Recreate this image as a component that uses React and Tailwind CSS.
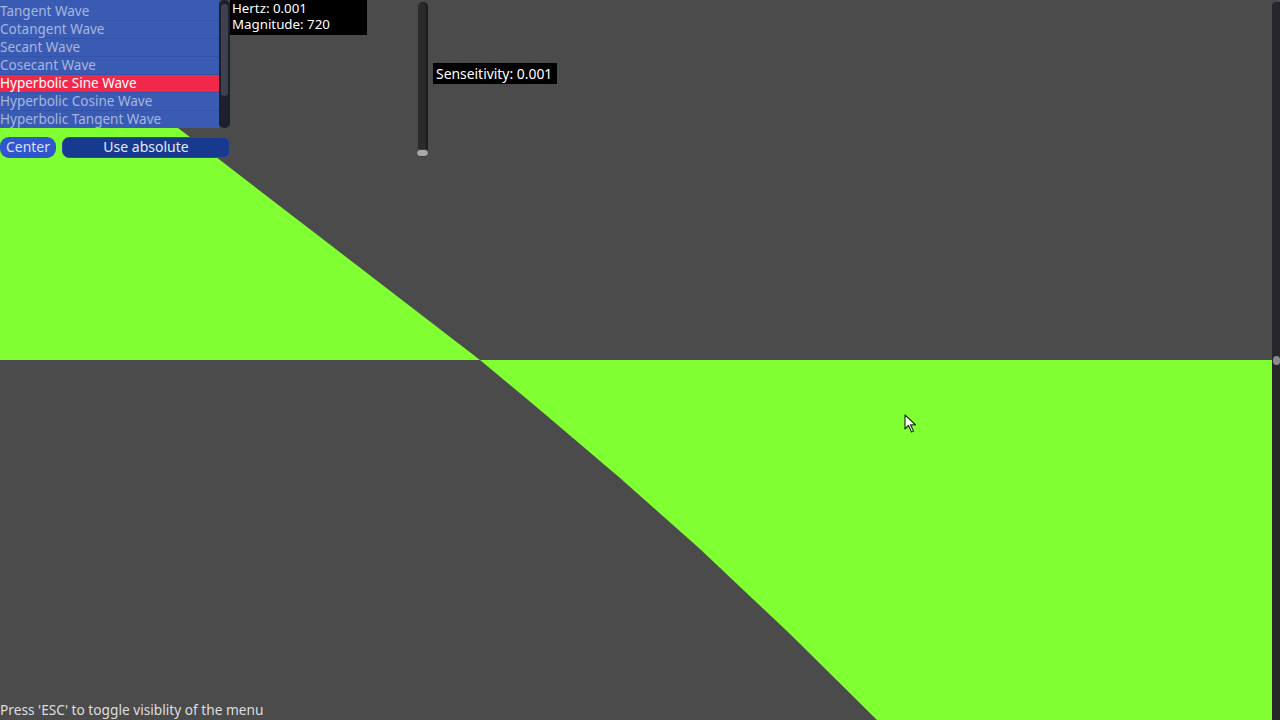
import React from 'react';

const waves = [
  'Tangent Wave',
  'Cotangent Wave',
  'Secant Wave',
  'Cosecant Wave',
  'Hyperbolic Sine Wave',
  'Hyperbolic Cosine Wave',
  'Hyperbolic Tangent Wave',
];

const selected = 'Hyperbolic Sine Wave';

const Graph = () => (
  <svg className="absolute inset-0" width="1280" height="720" viewBox="0 0 1280 720">
    {/* upper lobe */}
    <polygon
      points="0,-6 90,62 178,128 220,160 350,260 480,360 0,360"
      fill="#80ff32"
    />
    {/* lower lobe */}
    <polygon
      points="480,360 540,410 620,478 700,549 790,634 877,720 1272,720 1272,360"
      fill="#80ff32"
    />
  </svg>
);

const Cursor = () => (
  <svg className="absolute left-[904px] top-[414px]" width="14" height="20" viewBox="0 0 14 20">
    <path
      d="M1 1 L1 15 L4.5 11.5 L7.5 18 L9.5 17 L6.5 10.8 L11.5 10.8 Z"
      fill="#ffffff"
      stroke="#1e3a10"
      strokeWidth="1.2"
      strokeLinejoin="round"
    />
  </svg>
);

export default function App() {
  return (
    <div
      className="relative w-[1280px] h-[720px] overflow-hidden bg-[#4b4b4b] text-[13px] leading-none"
      style={{ fontFamily: '"Noto Sans", "Open Sans", sans-serif' }}
    >
      <Graph />

      {/* right edge scrollbar */}
      <div className="absolute right-0 top-[2px] bottom-0 w-[8px] bg-[#26262b] rounded-tl-sm">
        <div className="absolute left-[1px] top-[354px] w-[7px] h-[9px] rounded-sm bg-[#8a8a8a]" />
      </div>

      {/* wave menu */}
      <div className="absolute left-0 top-0 w-[230px] flex flex-col">
        <div className="flex h-[128px]">
          <div className="w-[219px] bg-[#3a5bb4] pt-[3px] flex flex-col overflow-hidden">
            {waves.map((w) => (
              <div
                key={w}
                className={`h-[18px] shrink-0 flex items-center whitespace-nowrap text-[13.5px] border-b border-[#3453a8] ${
                  w === selected ? 'bg-[#f2284a] text-white' : 'text-[#a6b6dc]'
                }`}
              >
                {w}
              </div>
            ))}
          </div>
          <div className="w-[11px] bg-[#4b4b4b] flex">
            <div className="flex-1 bg-[#1d1f2b] rounded-[5px] p-[2px] pt-[4px]">
              <div className="h-[92px] rounded-[4px] bg-[#3f4150]" />
            </div>
          </div>
        </div>
        <div className="flex gap-[6px] mt-[9px] h-[21px]">
          <button className="w-[56px] rounded-[9px] bg-[#2f56cc] text-[#d6e0ff] text-[14px] flex items-center justify-center pb-[1px]">
            Center
          </button>
          <button className="w-[168px] rounded-[7px] bg-[#173a8e] text-[#e4ebff] text-[14px] flex items-center justify-center pb-[1px] border border-[#2a4ca4]">
            Use absolute
          </button>
        </div>
      </div>

      {/* readout */}
      <div className="absolute left-[230px] top-0 w-[137px] h-[35px] bg-black text-white px-[2px] flex flex-col text-[13.3px] leading-[16px]">
        <div>Hertz: 0.001</div>
        <div>Magnitude: 720</div>
      </div>

      {/* sensitivity slider */}
      <div className="absolute left-[418px] top-[2px] w-[10px] h-[155px] rounded-full bg-[#2b2b2d] shadow-[inset_-2px_0_2px_rgba(0,0,0,0.4)]">
        <div className="absolute left-[-2px] bottom-0 w-[13px] h-[8px] rounded-full bg-[#a8a8a8] border border-[#3a3a3a]" />
      </div>
      <div className="absolute left-[433px] top-[63px] w-[124px] h-[21px] bg-black text-white flex items-center px-[3px] text-[13.9px] whitespace-nowrap">
        Senseitivity: 0.001
      </div>

      <Cursor />

      <div className="absolute left-0 top-[703px] text-[#dedede] text-[13.7px] whitespace-nowrap">
        Press 'ESC' to toggle visiblity of the menu
      </div>
    </div>
  );
}
